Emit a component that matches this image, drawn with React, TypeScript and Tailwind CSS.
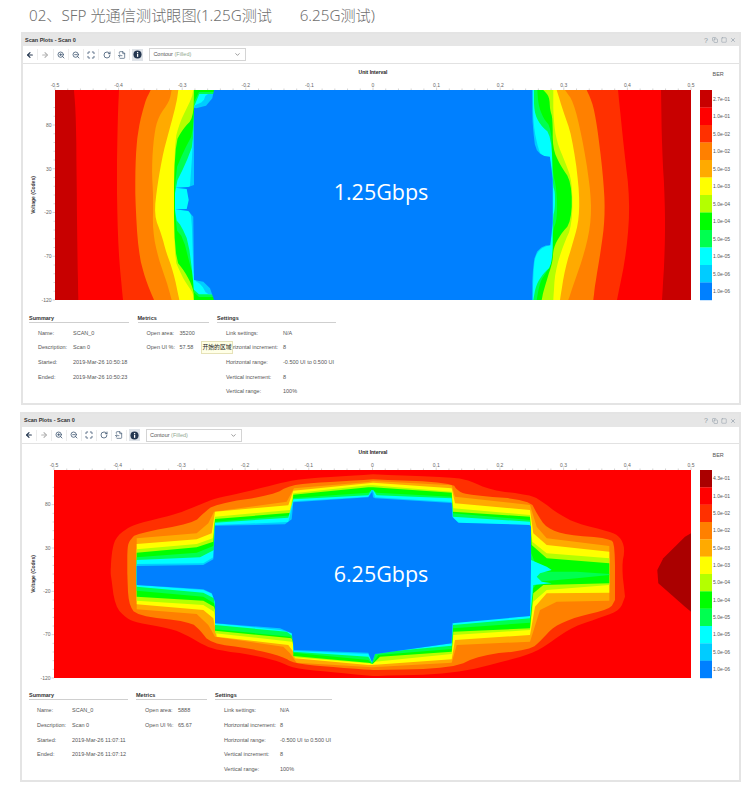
import React from "react";
import { ArrowLeft, ArrowRight, ZoomIn, ZoomOut, Maximize, RotateCw, FileOutput, ChevronDown, Copy, Square, X } from "lucide-react";

type P = number[][];
const COLORS = ["#c80000", "#ff0000", "#ff3000", "#ff8000", "#ffaa00", "#ffff00", "#b4ff00", "#00ff00", "#00ff50", "#00ffff", "#00ccff", "#0080ff"];
const toD = (p: P) => "M" + p.map((q) => q[0].toFixed(1) + " " + q[1].toFixed(1)).join("L") + "Z";

/* corner cutting, so traced contours read as curves */
const smooth = (p: P, n = 2): P => {
  let out = p;
  for (let k = 0; k < n; k++) {
    const next: P = [out[0]];
    for (let i = 0; i < out.length - 1; i++) {
      const a = out[i];
      const b = out[i + 1];
      next.push([a[0] * 0.75 + b[0] * 0.25, a[1] * 0.75 + b[1] * 0.25]);
      next.push([a[0] * 0.25 + b[0] * 0.75, a[1] * 0.25 + b[1] * 0.75]);
    }
    next.push(out[out.length - 1]);
    out = next;
  }
  return out;
};

/* Eye 1: edges traced from the plot, in 3x crop coordinates */
const L1 = (p: P) => p.map((q) => [130 + q[0] / 3, 85 + q[1] / 3]);
const R1 = (p: P) => p.map((q) => [510 + q[0] / 3, 85 + q[1] / 3]);
const LEFT1: P[] = [
  [[-168, 15], [-162, 100], [-160, 300], [-158, 500], [-155, 645]],
  [[-33, 15], [-37, 100], [-40, 300], [-35, 500], [-21, 645]],
  [[62, 15], [45, 50], [25, 130], [17, 210], [15, 340], [25, 500], [45, 580], [72, 645]],
  [[125, 15], [118, 50], [85, 95], [72, 150], [65, 250], [70, 340], [68, 440], [85, 520], [110, 590], [125, 645]],
  [[145, 15], [140, 50], [125, 110], [100, 200], [82, 300], [72, 390], [95, 450], [108, 500], [130, 560], [148, 645]],
  [[190, 15], [185, 40], [150, 110], [132, 175], [132, 520], [150, 560], [165, 590], [190, 625], [190, 645]],
  [[192, 15], [190, 100], [160, 130], [132, 180], [132, 520], [165, 560], [190, 610], [192, 645]],
  [[252, 21], [192, 21], [192, 140], [160, 200], [135, 260], [135, 430], [160, 460], [180, 540], [192, 580], [192, 636], [252, 636]],
  [[252, 27], [193, 27], [192, 170], [165, 240], [135, 300], [135, 400], [155, 425], [175, 470], [188, 570], [192, 628], [252, 628]],
  [[252, 27], [228, 27], [220, 50], [195, 60], [192, 66], [188, 190], [180, 300], [178, 345], [178, 375], [185, 400], [188, 500], [192, 585], [215, 600], [230, 628], [252, 628]],
  [[252, 15], [247, 40], [228, 62], [198, 70], [192, 68], [192, 300], [175, 306], [135, 308], [170, 312], [176, 345], [170, 372], [135, 373], [175, 378], [190, 395], [192, 585], [220, 590], [240, 610], [252, 645]],
];
const RIGHT1: P[] = [
  [[453, 15], [456, 195], [465, 345], [465, 495], [456, 645]],
  [[324, 15], [342, 195], [360, 345], [351, 495], [321, 645]],
  [[230, 15], [250, 60], [265, 150], [282, 300], [285, 400], [272, 500], [255, 600], [250, 645]],
  [[165, 15], [190, 50], [215, 150], [240, 300], [245, 400], [225, 500], [190, 600], [175, 645]],
  [[140, 15], [160, 80], [185, 150], [207, 300], [208, 400], [190, 470], [165, 550], [150, 645]],
  [[130, 15], [130, 100], [140, 170], [165, 230], [187, 290], [187, 420], [160, 480], [135, 560], [130, 645]],
  [[100, 15], [118, 35], [120, 75], [128, 100], [128, 190], [150, 240], [185, 290], [185, 410], [150, 450], [130, 490], [128, 530], [115, 570], [100, 620], [95, 645]],
  [[82, 15], [85, 60], [100, 100], [125, 130], [127, 260], [140, 310], [142, 400], [127, 440], [127, 530], [110, 560], [90, 590], [80, 645]],
  [[72, 15], [72, 80], [90, 120], [125, 150], [128, 300], [135, 320], [135, 370], [128, 400], [128, 540], [100, 565], [78, 600], [70, 645]],
  [[68, 15], [70, 120], [85, 195], [100, 218], [128, 218], [128, 480], [100, 485], [75, 510], [70, 570], [68, 645]],
  [[67, 15], [67, 100], [70, 140], [76, 190], [95, 212], [128, 216], [128, 480], [100, 482], [75, 505], [67, 570], [67, 645]],
];

const Eye1 = () => (
  <g>
    <rect x={55} y={90} width={636} height={210} fill={COLORS[0]} />
    {LEFT1.map((l, i) => {
      const a = i < 7 ? smooth(L1(l)) : i < 10 ? smooth(L1(l), 1) : L1(l);
      const b = i < 10 ? smooth(R1(RIGHT1[i])) : smooth(R1(RIGHT1[i]), 1);
      const c = COLORS[i + 1];
      if (i === 10) return <path key={i} d={toD([...a, ...[...b].reverse()])} fill={c} />;
      return (
        <g key={i} fill={c}>
          <path d={toD([...a, [373, a[a.length - 1][1]], [373, a[0][1]]])} />
          <path d={toD([...b, [373, b[b.length - 1][1]], [373, b[0][1]]])} />
        </g>
      );
    })}
  </g>
);

/* Eye 2: closed contours from two 3x crops */
const Z7 = (p: P) => p.map((q) => [40 + q[0] / 3, 470 + q[1] / 3]);
const Z8 = (p: P) => p.map((q) => [370 + q[0] / 3, 470 + q[1] / 3]);
const LEVELS2: { c: string; ul: P; ur: P; lr: P; ll: P }[] = [
  {
    c: COLORS[2],
    ul: [[212, 300], [215, 250], [225, 205], [260, 175], [295, 160], [400, 135], [440, 120], [490, 100], [525, 85], [600, 70], [700, 45], [760, 30], [850, 22], [999, 13]],
    ur: [[9, 13], [250, 22], [300, 32], [360, 60], [480, 75], [510, 90], [570, 135], [620, 160], [720, 185], [750, 200], [765, 235], [755, 290], [765, 380]],
    lr: [[9, 618], [250, 612], [420, 570], [500, 545], [550, 510], [610, 470], [700, 440], [750, 420], [765, 380]],
    ll: [[212, 310], [225, 410], [260, 445], [290, 458], [390, 475], [440, 495], [490, 525], [530, 540], [640, 555], [720, 575], [760, 595], [860, 605], [999, 618]],
  },
  {
    c: COLORS[3],
    ul: [[262, 300], [262, 230], [270, 210], [290, 190], [460, 160], [490, 130], [525, 102], [700, 75], [750, 45], [850, 37], [999, 28]],
    ur: [[9, 28], [245, 37], [265, 65], [300, 75], [480, 90], [500, 130], [530, 175], [590, 195], [720, 205], [735, 225], [735, 390]],
    lr: [[9, 600], [250, 595], [330, 555], [480, 540], [515, 510], [550, 470], [620, 440], [720, 418], [735, 390]],
    ll: [[262, 310], [265, 400], [290, 438], [450, 455], [480, 480], [510, 520], [630, 535], [730, 560], [760, 580], [860, 590], [999, 600]],
  },
  {
    c: COLORS[4],
    ul: [[290, 205], [470, 190], [505, 160], [522, 125], [740, 95], [762, 55], [985, 36], [999, 33]],
    ur: [[9, 33], [245, 46], [255, 80], [480, 105], [500, 170], [530, 205], [718, 228]],
    lr: [[5, 592], [245, 578], [260, 525], [480, 515], [510, 420], [560, 395], [718, 392]],
    ll: [[290, 418], [470, 432], [505, 465], [525, 500], [730, 530], [750, 550], [770, 578], [999, 592]],
  },
  {
    c: COLORS[5],
    ul: [[290, 222], [470, 208], [515, 190], [525, 125], [745, 106], [760, 62], [985, 40], [999, 38]],
    ur: [[9, 38], [245, 55], [255, 100], [480, 120], [490, 190], [530, 225], [718, 245]],
    lr: [[5, 585], [245, 568], [255, 510], [480, 495], [495, 410], [530, 370], [718, 368]],
    ll: [[290, 403], [490, 420], [520, 445], [525, 470], [530, 500], [745, 525], [760, 545], [765, 565], [985, 585]],
  },
  {
    c: COLORS[6],
    ul: [[290, 238], [470, 222], [518, 205], [525, 140], [750, 120], [760, 70], [985, 46], [999, 46]],
    ur: [[9, 46], [245, 65], [250, 115], [480, 135], [487, 215], [530, 250], [718, 265]],
    lr: [[15, 575], [245, 552], [250, 495], [480, 480], [490, 395], [530, 360], [718, 345]],
    ll: [[290, 392], [490, 405], [522, 425], [525, 440], [525, 490], [755, 515], [760, 525], [762, 562], [985, 580]],
  },
  {
    c: COLORS[7],
    ul: [[290, 248], [470, 232], [520, 215], [525, 147], [755, 128], [760, 74], [985, 52], [999, 52]],
    ur: [[9, 52], [245, 68], [248, 125], [480, 140], [485, 225], [530, 265], [718, 280]],
    lr: [[8, 582], [30, 560], [245, 545], [250, 485], [480, 475], [490, 370], [520, 345], [718, 340]],
    ll: [[290, 380], [490, 392], [522, 410], [525, 420], [525, 482], [755, 505], [760, 520], [760, 558], [985, 578], [999, 582]],
  },
  {
    c: COLORS[8],
    ul: [[290, 262], [470, 248], [520, 228], [525, 155], [755, 136], [760, 84], [985, 68], [995, 60]],
    ur: [[9, 60], [20, 68], [245, 80], [248, 130], [480, 150], [484, 250], [505, 305], [620, 305], [718, 312]],
    lr: [[8, 580], [25, 555], [245, 537], [248, 475], [480, 458], [490, 355], [505, 335], [620, 325], [718, 315]],
    ll: [[290, 362], [490, 380], [522, 400], [525, 415], [525, 478], [750, 500], [760, 510], [760, 548], [985, 570], [997, 582]],
  },
  {
    c: COLORS[9],
    ul: [[290, 270], [480, 262], [522, 240], [525, 158], [745, 143], [760, 88], [985, 76], [995, 60]],
    ur: [[9, 60], [20, 76], [245, 85], [248, 140], [480, 155], [483, 270], [530, 290], [545, 300], [510, 310], [500, 320]],
    lr: [[5, 580], [15, 548], [245, 527], [248, 465], [480, 445], [490, 345], [545, 340], [515, 335], [500, 320]],
    ll: [[290, 350], [490, 368], [522, 385], [525, 410], [525, 465], [740, 485], [760, 500], [760, 545], [985, 560], [997, 580]],
  },
  {
    c: COLORS[10],
    ul: [[290, 282], [490, 280], [520, 262], [525, 165], [745, 156], [760, 94], [985, 80], [995, 60]],
    ur: [[9, 60], [15, 82], [245, 96], [250, 145], [268, 160], [480, 165], [483, 170], [483, 340]],
    lr: [[5, 580], [15, 552], [245, 520], [250, 455], [480, 438], [483, 340]],
    ll: [[290, 345], [490, 360], [518, 372], [525, 400], [525, 460], [720, 480], [758, 490], [760, 543], [985, 552], [997, 580]],
  },
  {
    c: COLORS[11],
    ul: [[290, 288], [490, 285], [520, 268], [525, 167], [735, 163], [755, 148], [760, 97], [985, 82], [997, 65], [999, 82]],
    ur: [[9, 82], [15, 85], [245, 99], [247, 140], [265, 158], [478, 165], [483, 170], [483, 290]],
    lr: [[7, 575], [15, 552], [245, 520], [247, 460], [480, 438], [483, 290]],
    ll: [[290, 345], [490, 358], [515, 370], [525, 395], [525, 460], [720, 475], [755, 490], [762, 540], [985, 548], [997, 578]],
  },
];

const Eye2 = () => (
  <g>
    <rect x={54} y={470} width={637} height={208} fill="#ff0000" />
    <path d={toD(Z8([[963, 190], [945, 200], [880, 265], [862, 300], [865, 340], [945, 410], [963, 425]]))} fill="#aa0000" />
    {LEVELS2.map((v, i) => {
      const s = (p: P) => (i < 2 ? smooth(p) : p);
      return (
        <path
          key={i}
          fill={v.c}
          d={toD([...s(Z7(v.ul)), ...s(Z8(v.ur)), ...s(Z8([...v.lr].reverse())), ...s(Z7([...v.ll].reverse()))])}
        />
      );
    })}
  </g>
);

type ChartProps = {
  vb: number[];
  left: number;
  right: number;
  top: number;
  bottom: number;
  titleY: number;
  labelY: number;
  yTitleX: number;
  berY: number;
  legend: string[];
  first: string;
  big: string;
  bigY: number;
  children: React.ReactNode;
};

const XT = ["-0.5", "-0.4", "-0.3", "-0.2", "-0.1", "0", "0.1", "0.2", "0.3", "0.4", "0.5"];
const YT = ["120", "80", "30", "-20", "-70", "-120"];

function Chart({ vb, left, right, top, bottom, titleY, labelY, yTitleX, berY, legend, first, big, bigY, children }: ChartProps) {
  const h = bottom - top;
  const w = right - left;
  const unit = h / 240;
  const cells = [first, ...legend];
  const cell = h / 12;
  const minorX = Array.from({ length: 51 }, (_, i) => left + (i * w) / 50);
  const minorY = Array.from({ length: 23 }, (_, i) => bottom - i * 10 * unit);
  const midY = (top + bottom) / 2;
  return (
    <svg width={vb[2]} height={vb[3]} viewBox={vb.join(" ")} className="block font-['Liberation_Sans',sans-serif]">
      <text x={373} y={titleY} fontSize={5} fontWeight={700} textAnchor="middle" fill="#222">Unit Interval</text>
      <text x={yTitleX} y={midY} fontSize={5} fontWeight={700} textAnchor="middle" fill="#333" transform={`rotate(-90 ${yTitleX} ${midY})`}>Voltage (Codes)</text>
      <text x={712.5} y={berY} fontSize={5.5} fill="#555">BER</text>
      {XT.map((t, i) => (
        <text key={t} x={left + (i * w) / 10} y={labelY} fontSize={5} textAnchor="middle" fill="#666">{t}</text>
      ))}
      {minorX.map((x, i) => (
        <line key={i} x1={x} x2={x} y1={top - (i % 5 === 0 ? 2.5 : 1.5)} y2={top} stroke="#aaa" strokeWidth={0.5} />
      ))}
      {YT.slice(1).map((t, i) => (
        <text key={t} x={left - 3.5} y={bottom - (4 - i) * 50 * unit + 1.8} fontSize={5} textAnchor="end" fill="#666">{t}</text>
      ))}
      {minorY.map((y, i) => (
        <line key={i} x1={left - (i % 5 === 0 ? 2.5 : 1.5)} x2={left} y1={y} y2={y} stroke="#aaa" strokeWidth={0.5} />
      ))}
      {children}
      {cells.map((t, i) => (
        <g key={i}>
          <rect x={700} y={top + i * cell} width={12} height={cell + 0.2} fill={i === 0 && first.startsWith("4") ? "#aa0000" : COLORS[i]} />
          <text x={713} y={top + i * cell + cell / 2 + 1.8} fontSize={5} fill="#555">{t}</text>
        </g>
      ))}
      <text x={381} y={bigY} fontSize={21.5} textAnchor="middle" fill="#fff" fontFamily="'Open Sans', sans-serif">{big}</text>
    </svg>
  );
}

const InfoIcon = () => (
  <svg width="9" height="9" viewBox="0 0 10 10">
    <circle cx="5" cy="5" r="4.5" fill="#24364f" />
    <rect x="4.4" y="4.2" width="1.4" height="3.4" fill="#fff" />
    <rect x="4.4" y="2.2" width="1.4" height="1.3" fill="#fff" />
  </svg>
);

function Toolbar({ h, slot, gap, selectW }: { h: string; slot: string; gap: string; selectW: string }) {
  const color = "#3d5570";
  const icons = [
    <ArrowLeft key="a" size={8} strokeWidth={3.5} color="#24364f" />,
    <ArrowRight key="b" size={8} strokeWidth={3.5} color="#b4b4b4" />,
    <ZoomIn key="c" size={8} strokeWidth={2.4} color={color} />,
    <ZoomOut key="d" size={8} strokeWidth={2.4} color={color} />,
    <Maximize key="e" size={8} strokeWidth={2.6} color={color} />,
    <RotateCw key="f" size={8} strokeWidth={2.4} color={color} />,
    <FileOutput key="g" size={8} strokeWidth={2} color={color} />,
  ];
  return (
    <div className={`flex items-center border-b border-[#e2e2e2] bg-white ${h}`}>
      {icons.map((ic, i) => (
        <div key={i} className={`flex h-[11px] items-center justify-center border-r border-[#ececec] ${slot}`}>{ic}</div>
      ))}
      <div className={`flex h-[11px] items-center justify-center ${slot}`}>
        <div className="flex h-[12px] w-[11px] items-center justify-center bg-[#dfe3e8]">
          <InfoIcon />
        </div>
      </div>
      <div className={`flex h-[13px] items-center justify-between border border-[#d4d4d4] bg-white pl-[3px] pr-[4px] text-[5.5px] text-[#555] ${gap} ${selectW}`}>
        <span>
          Contour <span className="text-[#8fa88f]">(Filled)</span>
        </span>
        <ChevronDown size={7} strokeWidth={2} color="#555" />
      </div>
    </div>
  );
}

function TitleBar({ h }: { h: string }) {
  return (
    <div className={`flex items-center justify-between bg-[#e6e6e6] pl-[2px] pr-[3px] ${h}`}>
      <span className="text-[5.5px] font-bold text-[#333]">Scan Plots - Scan 0</span>
      <div className="flex items-center gap-[3px] text-[#8a97a3]">
        <span className="w-[6px] text-center text-[7px] leading-none">?</span>
        <Copy size={6} strokeWidth={2} />
        <Square size={6} strokeWidth={2} />
        <X size={6} strokeWidth={2.5} />
      </div>
    </div>
  );
}

type Row = [string, string];
function Section({ title, rows, w, label, pl, mt }: { title: string; rows: Row[]; w: string; label: string; pl: string; mt: string }) {
  return (
    <div className={`flex flex-col ${w}`}>
      <div className="h-[9px] border-b border-[#cfcfcf] text-[5.5px] font-bold leading-[8px] text-[#333]">{title}</div>
      <div className={`flex flex-col ${mt} ${pl}`}>
        {rows.map(([a, b]) => (
          <div key={a} className="flex h-[14.7px] items-center text-[5.5px] text-[#555]">
            <span className={`shrink-0 ${label}`}>{a}</span>
            <span>{b}</span>
          </div>
        ))}
      </div>
    </div>
  );
}

const LEGEND = ["1.0e-01", "5.0e-02", "1.0e-02", "5.0e-03", "1.0e-03", "5.0e-04", "1.0e-04", "5.0e-05", "1.0e-05", "5.0e-06", "1.0e-06"];

export default function App() {
  return (
    <div className="flex h-[785px] w-[750px] flex-col overflow-hidden bg-white font-['Liberation_Sans',sans-serif]">
      <div className="h-[32px] whitespace-pre pl-[29px] pt-[5px] font-['Noto_Sans','Noto_Sans_CJK_SC',sans-serif] text-[15.2px] font-light leading-[21px] text-[#707070]">
        02、SFP 光通信测试眼图(1.25G测试       6.25G测试)
      </div>

      <div className="relative ml-[21px] h-[373px] w-[720px] border-2 border-[#e4e4e4]">
        <TitleBar h="h-[12px]" />
        <Toolbar h="h-[18px]" slot="w-[15.3px]" gap="ml-[4px]" selectW="w-[97px]" />
        <Chart vb={[23, 64, 716, 240]} left={55} right={691} top={90} bottom={300} titleY={74} labelY={87} yTitleX={35} berY={76} first="2.7e-01" legend={LEGEND} big="1.25Gbps" bigY={200}>
          <Eye1 />
        </Chart>
        <div className="ml-[6px] mt-[9.5px] flex gap-[8.5px]">
          <Section title="Summary" w="w-[100px]" mt="mt-[3px]" pl="pl-[9px]" label="w-[35px]" rows={[["Name:", "SCAN_0"], ["Description:", "Scan 0"], ["Started:", "2019-Mar-26 10:50:18"], ["Ended:", "2019-Mar-26 10:50:23"]]} />
          <Section title="Metrics" w="w-[71px]" mt="mt-[3px]" pl="pl-[9px]" label="w-[33px]" rows={[["Open area:", "35200"], ["Open UI %:", "57.58"]]} />
          <Section title="Settings" w="w-[119px]" mt="mt-[3px]" pl="pl-[9px]" label="w-[57px]" rows={[["Link settings:", "N/A"], ["Horizontal increment:", "8"], ["Horizontal range:", "-0.500 UI to 0.500 UI"], ["Vertical increment:", "8"], ["Vertical range:", "100%"]]} />
        </div>
        <div className="absolute left-[178px] top-[307px] flex h-[13px] w-[32px] items-center justify-center border border-[#e6e2b8] bg-[#ffffe6] font-['Noto_Sans_CJK_SC',sans-serif] text-[5.8px] text-[#222]">
          开始的区域
        </div>
      </div>

      <div className="ml-[20px] mt-[7px] h-[370px] w-[721px] border-2 border-[#e4e4e4]">
        <TitleBar h="h-[13px]" />
        <Toolbar h="h-[17px]" slot="w-[15px]" gap="ml-[4px]" selectW="w-[96px]" />
        <Chart vb={[22, 444, 717, 238]} left={54} right={691} top={470} bottom={678} titleY={454} labelY={467} yTitleX={35} berY={457} first="4.3e-01" legend={LEGEND} big="6.25Gbps" bigY={582}>
          <Eye2 />
        </Chart>
        <div className="ml-[7px] mt-[8.5px] flex gap-[8px]">
          <Section title="Summary" w="w-[99px]" mt="mt-[3.5px]" pl="pl-[8px]" label="w-[35px]" rows={[["Name:", "SCAN_0"], ["Description:", "Scan 0"], ["Started:", "2019-Mar-26 11:07:11"], ["Ended:", "2019-Mar-26 11:07:12"]]} />
          <Section title="Metrics" w="w-[71px]" mt="mt-[3.5px]" pl="pl-[9px]" label="w-[33px]" rows={[["Open area:", "5888"], ["Open UI %:", "65.67"]]} />
          <Section title="Settings" w="w-[117px]" mt="mt-[3.5px]" pl="pl-[9px]" label="w-[56px]" rows={[["Link settings:", "N/A"], ["Horizontal increment:", "8"], ["Horizontal range:", "-0.500 UI to 0.500 UI"], ["Vertical increment:", "8"], ["Vertical range:", "100%"]]} />
        </div>
      </div>
    </div>
  );
}
